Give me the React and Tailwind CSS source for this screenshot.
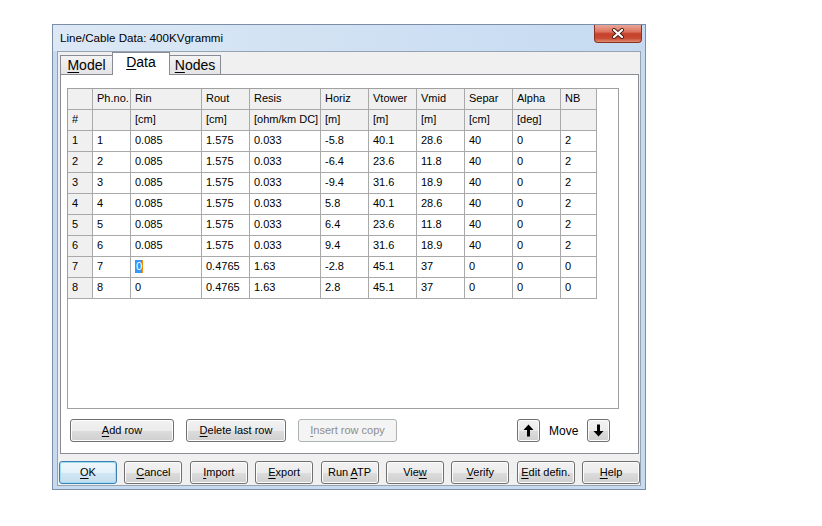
import clsx from 'clsx';

const cols = [25, 38, 71, 48, 71, 48, 48, 48, 48, 48, 36];

const head1 = ['', 'Ph.no.', 'Rin', 'Rout', 'Resis', 'Horiz', 'Vtower', 'Vmid', 'Separ', 'Alpha', 'NB'];
const head2 = ['#', '', '[cm]', '[cm]', '[ohm/km DC]', '[m]', '[m]', '[m]', '[cm]', '[deg]', ''];

const rows = [
  ['1', '1', '0.085', '1.575', '0.033', '-5.8', '40.1', '28.6', '40', '0', '2'],
  ['2', '2', '0.085', '1.575', '0.033', '-6.4', '23.6', '11.8', '40', '0', '2'],
  ['3', '3', '0.085', '1.575', '0.033', '-9.4', '31.6', '18.9', '40', '0', '2'],
  ['4', '4', '0.085', '1.575', '0.033', '5.8', '40.1', '28.6', '40', '0', '2'],
  ['5', '5', '0.085', '1.575', '0.033', '6.4', '23.6', '11.8', '40', '0', '2'],
  ['6', '6', '0.085', '1.575', '0.033', '9.4', '31.6', '18.9', '40', '0', '2'],
  ['7', '7', '0', '0.4765', '1.63', '-2.8', '45.1', '37', '0', '0', '0'],
  ['8', '8', '0', '0.4765', '1.63', '2.8', '45.1', '37', '0', '0', '0'],
];

// label with an underlined access key, e.g. "&Add row"
function Label({ text }) {
  const i = text.indexOf('&');
  if (i < 0) return <span className="whitespace-pre">{text}</span>;
  return (
    <span className="whitespace-pre">
      {text.slice(0, i)}
      <span className="underline underline-offset-[2px]">{text[i + 1]}</span>
      {text.slice(i + 2)}
    </span>
  );
}

function Btn({ text, w, def, disabled, className }) {
  return (
    <div
      style={{ width: w }}
      className={clsx(
        'h-[23px] flex items-center justify-center rounded-[3px] border text-[11px] shrink-0',
        disabled
          ? 'border-[#adb2b5] bg-[#f4f4f4] text-[#8d8d8d]'
          : def
          ? 'border-[#3c7fb1] text-black bg-[linear-gradient(#eef7fc_0%,#e4f1f9_50%,#d2e7f4_50%,#c4deef_100%)] shadow-[inset_0_0_0_1px_#9fdcf6]'
          : 'border-[#707070] text-black bg-[linear-gradient(#f2f2f2_0%,#ebebeb_50%,#dddddd_50%,#cfcfcf_100%)] shadow-[inset_0_0_0_1px_#fcfcfc]',
        className
      )}
    >
      <Label text={text} />
    </div>
  );
}

function ArrowBtn({ down }) {
  return (
    <div className="w-[23px] h-[23px] flex items-center justify-center rounded-[3px] border border-[#707070] bg-[linear-gradient(#f2f2f2_0%,#ebebeb_50%,#dddddd_50%,#cfcfcf_100%)] shadow-[inset_0_0_0_1px_#fcfcfc]">
      <svg width="11" height="13" viewBox="0 0 11 13" className={down ? 'rotate-180' : ''}>
        <path d="M5.5 0.5 L10.5 6 H7 V12.5 H4 V6 H0.5 Z" fill="#000" />
      </svg>
    </div>
  );
}

function Cell({ children, fixed, w }) {
  return (
    <div
      style={{ width: w }}
      className={clsx(
        'h-[21px] border-b border-r border-[#a9a9a9] pl-[4px] pb-[1px] flex items-center whitespace-nowrap overflow-hidden shrink-0',
        fixed ? 'bg-[#f0f0f0]' : 'bg-white'
      )}
    >
      {children}
    </div>
  );
}

function Grid() {
  return (
    <div className="w-[552px] h-[321px] border border-[#a0a0a0] bg-white text-[11px] text-black">
      {[head1, head2].map((r, ri) => (
        <div key={'h' + ri} className="flex">
          {r.map((c, ci) => (
            <Cell key={ci} w={cols[ci]} fixed>
              {c}
            </Cell>
          ))}
        </div>
      ))}
      {rows.map((r, ri) => (
        <div key={ri} className="flex">
          {r.map((c, ci) => (
            <Cell key={ci} w={cols[ci]} fixed={ci === 0}>
              {ri === 6 && ci === 2 ? (
                <span className="bg-[#3399ff] text-white pl-[1px] border-r border-[#ff8a00] leading-[13px]">{c}</span>
              ) : (
                c
              )}
            </Cell>
          ))}
        </div>
      ))}
    </div>
  );
}

function Tab({ text, active, className }) {
  return (
    <div
      className={clsx(
        'flex items-center justify-center border-[#898c95] border-t border-l border-r text-[14px]',
        active
          ? 'h-[23px] bg-white -mb-[1px] relative z-10 pb-[3px]'
          : 'h-[19px] bg-[linear-gradient(#f3f3f3,#e4e4e4)]',
        className
      )}
    >
      <Label text={text} />
    </div>
  );
}

export default function App() {
  return (
    <div className="w-[822px] h-[526px] bg-white pt-[24px] pl-[52px] font-['Liberation_Sans',Arial,sans-serif] text-black">
      <div className="w-[594px] h-[466px] border border-[#7b8ea5] bg-[#c6daf0] flex flex-col">
        {/* title bar */}
        <div className="h-[26px] flex items-start justify-between bg-[linear-gradient(90deg,#dce8f5,#c5daf1)]">
          <div className="pl-[7px] pt-[6px] text-[11.6px] leading-[14px] text-black">Line/Cable Data: 400KVgrammi</div>
          <div className="mr-[3px] w-[48px] h-[18px] rounded-b-[4px] border border-t-0 border-[#8a3325] bg-[linear-gradient(#eaa697_0%,#dc735d_40%,#c6412b_52%,#c84a33_78%,#e18b70_100%)] flex items-center justify-center">
            <svg width="14" height="11" viewBox="0 0 14 11">
              <path d="M3 2 L11 9 M11 2 L3 9" stroke="#4a1a12" strokeWidth="4" strokeLinecap="round" />
              <path d="M3 2 L11 9 M11 2 L3 9" stroke="#ffffff" strokeWidth="2.2" strokeLinecap="round" />
            </svg>
          </div>
        </div>
        {/* client */}
        <div className="mx-[4px] h-[435px] border border-[#97a3b3] bg-[#f0f0f0] flex flex-col">
          {/* tabs */}
          <div className="h-[22px] flex items-end pl-[2px]">
            <Tab text="&Model" className="w-[53px]" />
            <Tab text="&Data" active className="w-[58px] -ml-[1px]" />
            <Tab text="&Nodes" className="w-[52px] -ml-[1px]" />
          </div>
          {/* tab panel */}
          <div className="ml-[2px] w-[579px] h-[380px] border border-[#898c95] bg-white pl-[6px] pt-[13px] flex flex-col">
            <Grid />
            <div className="mt-[10px] flex items-center pl-[3px]">
              <Btn text="&Add row" w={104} />
              <Btn text="&Delete last row" w={100} className="ml-[12px]" />
              <Btn text="&Insert row copy" w={99} disabled className="ml-[12px]" />
              <div className="ml-[120px]">
                <ArrowBtn />
              </div>
              <span className="ml-[9px] text-[12px]">Move</span>
              <div className="ml-[9px]">
                <ArrowBtn down />
              </div>
            </div>
          </div>
          {/* bottom buttons */}
          <div className="mt-[7px] pl-[1px] flex gap-[7.4px]">
            <Btn text="&OK" w={58} def />
            <Btn text="&Cancel" w={58} />
            <Btn text="&Import" w={58} />
            <Btn text="&Export" w={58} />
            <Btn text="Run &ATP" w={58} />
            <Btn text="Vie&w" w={58} />
            <Btn text="&Verify" w={58} />
            <Btn text="&Edit defin." w={58} />
            <Btn text="&Help" w={58} />
          </div>
        </div>
      </div>
    </div>
  );
}
